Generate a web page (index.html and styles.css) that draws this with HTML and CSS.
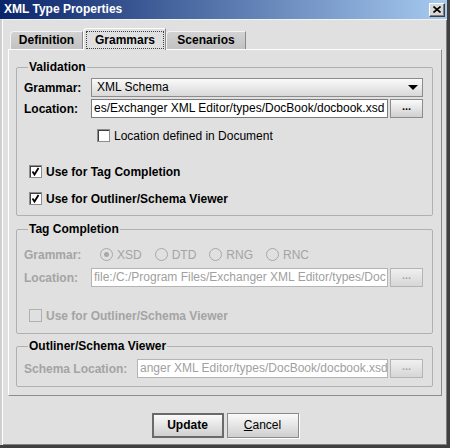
FILE: index.html
```html
<!DOCTYPE html>
<html>
<head>
<meta charset="utf-8">
<link rel="stylesheet" href="styles.css">
</head>
<body>
<div class="window">
  <div class="titlebar">
    <span class="title">XML Type Properties</span>
    <span class="close"><svg width="8" height="7" viewBox="0 0 8 7"><path d="M0.5 0.5 L7.5 6.5 M7.5 0.5 L0.5 6.5" stroke="#000" stroke-width="1.6" fill="none"/></svg></span>
  </div>
  <div class="body">
    <div class="tabs">
      <div class="tab tab-def">Definition</div>
      <div class="tab tab-gram selected"><span class="focus">Grammars</span></div>
      <div class="tab tab-scen">Scenarios</div>
    </div>
    <div class="panel">
      <fieldset class="group group-validation">
        <legend>Validation</legend>
        <div class="row">
          <span class="lbl">Grammar:</span>
          <div class="select">XML Schema<span class="arrow"></span></div>
        </div>
        <div class="row row-gap-2">
          <span class="lbl">Location:</span>
          <div class="field">es/Exchanger XML Editor/types/DocBook/docbook.xsd</div>
          <div class="dots">...</div>
        </div>
        <div class="check indent first-check"><span class="cb"></span><span class="plain">Location defined in Document</span></div>
        <div class="check tag-check"><span class="cb checked"><svg width="11" height="11" viewBox="0 0 11 11"><path d="M2.5 5.5 L4.5 8.5 L8.5 2" stroke="#000" stroke-width="1.8" fill="none"/></svg></span>Use for Tag Completion</div>
        <div class="check outl-check"><span class="cb checked"><svg width="11" height="11" viewBox="0 0 11 11"><path d="M2.5 5.5 L4.5 8.5 L8.5 2" stroke="#000" stroke-width="1.8" fill="none"/></svg></span>Use for Outliner/Schema Viewer</div>
      </fieldset>

      <fieldset class="group group-tag">
        <legend>Tag Completion</legend>
        <div class="row radio-row">
          <span class="lbl disabled">Grammar:</span>
          <div class="radios">
            <span class="radio on"><span class="rb"></span>XSD</span>
            <span class="radio"><span class="rb"></span>DTD</span>
            <span class="radio"><span class="rb"></span>RNG</span>
            <span class="radio"><span class="rb"></span>RNC</span>
          </div>
        </div>
        <div class="row row-gap-3">
          <span class="lbl disabled">Location:</span>
          <div class="field off">file:/C:/Program Files/Exchanger XML Editor/types/Doc</div>
          <div class="dots off">...</div>
        </div>
        <div class="check disabled tag-outl"><span class="cb off"></span>Use for Outliner/Schema Viewer</div>
      </fieldset>

      <fieldset class="group group-outl">
        <legend>Outliner/Schema Viewer</legend>
        <div class="row">
          <span class="lbl lbl-wide disabled">Schema Location:</span>
          <div class="field off">anger XML Editor/types/DocBook/docbook.xsd</div>
          <div class="dots off">...</div>
        </div>
      </fieldset>
    </div>
    <div class="buttons">
      <div class="button default">Update</div>
      <div class="button"><span class="plain"><u>C</u>ancel</span></div>
    </div>
  </div>
</div>
</body>
</html>
```
FILE: styles.css
```css
* { box-sizing: border-box; }
html, body { margin: 0; padding: 0; }
body {
  width: 450px; height: 448px; overflow: hidden;
  font-family: "Liberation Sans", Arial, sans-serif;
  font-size: 12px; font-weight: bold; color: #000;
  background: #e0e0e0;
}
.window {
  width: 450px; height: 448px;
  display: flex; flex-direction: column;
  background: #e0e0e0;
  border-right: 3px solid #404040;
  border-bottom: 3px solid #404040;
}
.titlebar {
  height: 19px; flex: none;
  display: flex; align-items: center; justify-content: space-between;
  padding-left: 4px; padding-right: 2px;
  background: linear-gradient(to right, #0a246a, #a6caf0);
  color: #fff; font-size: 12px; font-weight: bold;
}
.title { line-height: 19px; }
.close {
  width: 16px; height: 14px;
  display: flex; align-items: center; justify-content: center;
  background: #d8d8d8;
  border: 1px solid; border-color: #fff #404040 #404040 #fff;
  box-shadow: inset -1px -1px 0 #808080;
}
.body {
  flex: 1;
  display: flex; flex-direction: column;
  border-left: 2px solid #cfcfcf;
  border-top: 1px solid #f2f2f2;
  box-shadow: inset 1px 0 0 #fff, inset -1px -1px 0 #808080;
}
.tabs {
  display: flex; align-items: flex-end;
  height: 21px; margin-top: 8px; padding-left: 8px;
}
.tab {
  height: 18px; line-height: 17px; text-align: center;
  background: linear-gradient(#d2d2d2, #c2c2c2);
  border: 1px solid; border-bottom: none;
  border-color: #f4f4f4 #8a8a8a transparent #f4f4f4;
  border-top-left-radius: 4px;
}
.tab-def { width: 73px; }
.tab-gram { width: 83px; }
.tab-scen { width: 80px; }
.tab.selected {
  background: #e0e0e0; padding: 2px 1px 0 2px;
  border-color: #fff #8a8a8a transparent #fff;
  position: relative; z-index: 1; margin-bottom: -1px; height: 22px;
}
.focus {
  display: block; height: 18px; line-height: 16px;
  border: 1px dotted #404040;
}
.panel {
  margin: 0 5px 0 6px;
  border: 1px solid; border-color: #fff #8c8c8c #8c8c8c #fff;
  padding: 10px 8px 8px 7px;
}
.group {
  margin: 0; min-width: 0;
  border: 1px solid #b0b0b0; border-radius: 2px;
  padding: 4px 9px 6px 7px;
}
.group legend {
  padding: 0 1px; margin-left: 4px;
  line-height: 14px; font-weight: bold;
}
.group-tag { margin-top: 6px; padding-top: 8px; padding-bottom: 7px; }
.group-outl { margin-top: 5px; padding-top: 6px; padding-bottom: 8px; }
.row { display: flex; align-items: center; height: 19px; }
.row-gap-2 { margin-top: 2px; }
.row-gap-3 { margin-top: 3px; }
.lbl { width: 67px; flex: none; }
.lbl-wide { width: 113px; }
.disabled { color: #a4a4a4; }
.plain { font-weight: normal; }
.select {
  flex: 1; height: 19px; position: relative;
  padding-left: 5px; line-height: 17px; font-weight: normal;
  border: 1px solid #8c8c8c;
  background: linear-gradient(#fafafa, #d8d8d8);
}
.arrow {
  position: absolute; right: 4px; top: 6px;
  width: 0; height: 0;
  border-left: 5px solid transparent; border-right: 5px solid transparent;
  border-top: 5px solid #000;
}
.field {
  flex: 1; height: 19px; min-width: 0;
  padding-left: 2px; line-height: 17px;
  font-weight: normal; white-space: nowrap; overflow: hidden;
  background: #fff;
  border: 1px solid #7c7c7c;
}
.field.off { color: #a0a0a0; border-color: #b4b4b4; }
.dots {
  width: 33px; height: 19px; margin-left: 2px; flex: none;
  text-align: center; line-height: 13px; font-size: 11px;
  border: 1px solid #8c8c8c;
  background: linear-gradient(#fafafa, #cfcfcf);
}
.dots.off { color: #a8a8a8; border-color: #b4b4b4; background: linear-gradient(#f0f0f0, #d6d6d6); }
.check { display: flex; align-items: center; height: 21px; padding-left: 5px; }
.check.indent { padding-left: 73px; }
.first-check { margin-top: 7px; }
.tag-check { margin-top: 15px; }
.outl-check { margin-top: 6px; }
.tag-outl { margin-top: 18px; }
.cb {
  width: 13px; height: 13px; margin-right: 4px; flex: none;
  display: flex; align-items: center; justify-content: center;
  background: #fff;
  border: 1px solid #8c8c8c;
  box-shadow: inset 1px 1px 0 #404040;
}
.cb.off { background: transparent; border-color: #b0b0b0; box-shadow: none; }
.radios { display: flex; padding-left: 9px; font-weight: normal; color: #a4a4a4; }
.radio { display: flex; align-items: center; margin-right: 13px; }
.rb {
  width: 13px; height: 13px; margin-right: 4px; border-radius: 50%;
  border: 1px solid #a8a8a8; position: relative;
}
.radio.on .rb::after {
  content: ""; position: absolute; left: 3px; top: 3px;
  width: 5px; height: 5px; border-radius: 50%; background: #a8a8a8;
}
.radio-row { height: 21px; }
.buttons {
  display: flex; justify-content: center; gap: 3px;
  margin-top: 17px; padding-left: 1px;
}
.button {
  width: 72px; height: 25px; line-height: 23px; text-align: center;
  border: 1px solid #8a8a8a;
  box-shadow: 1px 1px 0 #fff;
  background: linear-gradient(#fafafa, #cfcfcf);
}
.button.default {
  border: 2px solid #6a6a6a; line-height: 21px; box-shadow: none;
}
```
